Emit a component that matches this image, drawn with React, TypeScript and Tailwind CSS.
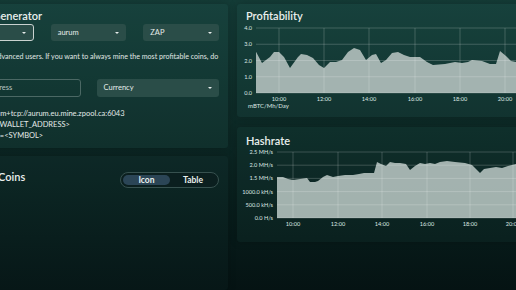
import React from "react";

type Pt = [number, number];

const profitPoints: Pt[] = [
  [256, 51.7], [262, 63], [270, 57], [274, 52], [279, 52], [284, 57], [290, 68],
  [298, 57], [301, 54], [307, 55], [313, 58], [319, 65], [324, 68], [330, 62],
  [336, 62], [342, 60], [348, 52], [354, 48], [360, 50], [366, 60], [372, 55],
  [376, 54], [381, 63], [386, 60], [392, 53], [398, 52], [404, 55], [410, 57],
  [420, 57], [427, 62], [433, 65], [445, 64], [455, 62], [462, 63], [468, 62],
  [472, 60], [482, 61], [490, 64], [496, 64], [500, 51], [506, 56], [511, 61],
  [516, 62], [524, 62],
];

const hashPoints: Pt[] = [
  [277, 177], [283, 177], [288, 179], [293, 180], [300, 179], [307, 178],
  [310, 182], [315, 182], [318, 181], [323, 177], [327, 175], [333, 177],
  [338, 176], [345, 175], [353, 175], [359, 174], [364, 173], [371, 173],
  [374, 173], [377, 162], [381, 164], [386, 166], [390, 162], [395, 163],
  [400, 163], [406, 164], [410, 170], [415, 166], [420, 163], [425, 164],
  [430, 163], [435, 164], [440, 162], [447, 161], [455, 162], [465, 163],
  [472, 165], [480, 173], [484, 169], [490, 168], [496, 167], [502, 168],
  [508, 166], [516, 164], [524, 164],
];

function areaPath(points: Pt[], base: number) {
  const line = points.map(([x, y], i) => `${i === 0 ? "M" : "L"}${x} ${y}`).join(" ");
  const first = points[0][0];
  const last = points[points.length - 1][0];
  return `${line} L${last} ${base} L${first} ${base} Z`;
}

type ChartProps = {
  offsetY: number;
  height: number;
  plotLeft: number;
  labelRight: number;
  yTicks: { y: number; label: string }[];
  xTicks: { x: number; label: string }[];
  xLabelY: number;
  points: Pt[];
  unit?: string;
};

// chart coordinates are written in page pixels, shifted back by the panel origin
function AreaChart({ offsetY, height, plotLeft, labelRight, yTicks, xTicks, xLabelY, points, unit }: ChartProps) {
  const top = yTicks[0].y;
  const base = yTicks[yTicks.length - 1].y;
  return (
    <svg width={300} height={height} className="block" style={{ fontFamily: "Lato, sans-serif" }}>
      <g transform={`translate(-237 ${-offsetY})`}>
        <path d={areaPath(points, base)} fill="#b0bebb" fillOpacity={0.92} />
        {yTicks.map(t => (
          <line key={t.label} x1={plotLeft} x2={540} y1={t.y} y2={t.y} stroke="#ffffff" strokeOpacity={0.28} strokeWidth={0.7} />
        ))}
        {xTicks.map(t => (
          <line key={t.label} x1={t.x} x2={t.x} y1={top} y2={base} stroke="#ffffff" strokeOpacity={0.28} strokeWidth={0.7} />
        ))}
        {yTicks.map(t => (
          <text key={t.label} x={labelRight} y={t.y + 2} textAnchor="end" fontSize={5.6} fill="#dfe7e5">
            {t.label}
          </text>
        ))}
        {xTicks.map(t => (
          <text key={t.label} x={t.x} y={xLabelY + 2} textAnchor="middle" fontSize={5.6} fill="#dfe7e5">
            {t.label}
          </text>
        ))}
        {unit && (
          <text x={248} y={107.5} fontSize={6} fill="#dfe7e5">
            {unit}
          </text>
        )}
      </g>
    </svg>
  );
}

function Caret() {
  return <span className="h-0 w-0 border-x-[2px] border-t-[2px] border-x-transparent border-t-[#e6ecea]" />;
}

function Select({ label, focused = false }: { label: string; focused?: boolean }) {
  return (
    <div
      className={`flex h-[17px] items-center justify-between rounded-[3px] bg-[#2a4d48] px-[7px] text-[7.5px] text-[#e6ecea] ${focused ? "border border-[#c9d2d0]" : ""}`}
    >
      <span>{label}</span>
      <Caret />
    </div>
  );
}

export default function App() {
  return (
    <div
      className="relative flex h-[290px] w-[516px] gap-[9px] overflow-hidden bg-gradient-to-b from-[#143c37] via-[#0c2724] to-[#051313] pt-[4px] text-[#e9efed]"
      style={{ fontFamily: "Lato, 'Noto Sans', sans-serif" }}
    >
      <div className="ml-[-51px] flex w-[279px] shrink-0 flex-col gap-[8px]">
        <section className="h-[151px] rounded-[3px] bg-[#2d6d64]/[0.14] px-[9px] pt-[5px] shadow-[0_0_8px_rgba(0,0,0,0.2)]">
          <h2 className="text-[11px] font-semibold leading-[14px]">Config Generator</h2>
          <div className="mt-[1px] grid grid-cols-3 gap-[17px]">
            <Select label="ccminer" focused />
            <Select label="aurum" />
            <Select label="ZAP" />
          </div>
          <p className="mt-[11px] whitespace-nowrap pl-[4px] text-[7.1px] leading-[10px] text-[#e0e7e5]">
            This is for advanced users. If you want to always mine the most profitable coins, do
          </p>
          <div className="mt-[17px] grid grid-cols-2 gap-[16px]">
            <div className="flex h-[18px] items-center rounded-[3px] border border-[#4b6864] pl-[4px] text-[7.5px] text-[#b9c6c3]">
              Wallet Address
            </div>
            <div className="flex h-[18px] items-center justify-between rounded-[3px] bg-[#2a4d48] px-[7px] text-[7.5px] text-[#e6ecea]">
              <span>Currency</span>
              <Caret />
            </div>
          </div>
          <div className="mt-[11px] whitespace-nowrap text-[7.5px] leading-[11px] text-[#e3eae8]">
            <div className="ml-[-2px]">Server: stratum+tcp://aurum.eu.mine.zpool.ca:6043</div>
            <div>Username: &lt;WALLET_ADDRESS&gt;</div>
            <div className="pl-[3px]">Password: c=&lt;SYMBOL&gt;</div>
          </div>
        </section>
        <section className="h-[140px] rounded-[3px] bg-[#2d6d64]/[0.06] px-[9px] pt-[16px] shadow-[0_0_8px_rgba(0,0,0,0.2)]">
          <div className="flex items-start justify-between">
            <h2 className="mt-[-2px] text-[11px] font-semibold leading-[14px]">Current Coins</h2>
            <div className="flex h-[16px] w-[99px] items-center rounded-full border border-[#37514f] bg-[#0b1f1f] p-[2px] text-[8.5px] font-bold">
              <span className="flex h-full w-[47px] items-center justify-center rounded-full bg-[#2b4556]">Icon</span>
              <span className="flex h-full flex-1 items-center justify-center">Table</span>
            </div>
          </div>
        </section>
      </div>

      <div className="flex w-[300px] shrink-0 flex-col gap-[10px]">
        <section className="h-[113px] rounded-[3px] bg-[#2d6d64]/[0.14] pt-[5px] shadow-[0_0_8px_rgba(0,0,0,0.2)]">
          <h2 className="pl-[9px] text-[11px] font-semibold leading-[14px]">Profitability</h2>
          <AreaChart
            offsetY={23}
            height={90}
            plotLeft={256}
            labelRight={252}
            yTicks={[
              { y: 28, label: "4.0" },
              { y: 44.25, label: "3.0" },
              { y: 60.5, label: "2.0" },
              { y: 76.75, label: "1.0" },
              { y: 93, label: "0.0" },
            ]}
            xTicks={[
              { x: 279, label: "10:00" },
              { x: 324, label: "12:00" },
              { x: 369, label: "14:00" },
              { x: 415, label: "16:00" },
              { x: 460, label: "18:00" },
              { x: 505, label: "20:00" },
            ]}
            xLabelY={99}
            points={profitPoints}
            unit="mBTC/Mh/Day"
          />
        </section>
        <section className="h-[115px] rounded-[3px] bg-[#2d6d64]/[0.09] pt-[7px] shadow-[0_0_8px_rgba(0,0,0,0.2)]">
          <h2 className="pl-[9px] text-[11px] font-semibold leading-[14px]">Hashrate</h2>
          <AreaChart
            offsetY={148}
            height={84}
            plotLeft={277}
            labelRight={273}
            yTicks={[
              { y: 152, label: "2.5 MH/s" },
              { y: 165.2, label: "2.0 MH/s" },
              { y: 178.4, label: "1.5 MH/s" },
              { y: 191.6, label: "1000.0 kH/s" },
              { y: 204.8, label: "500.0 kH/s" },
              { y: 218, label: "0.0 H/s" },
            ]}
            xTicks={[
              { x: 293, label: "10:00" },
              { x: 338, label: "12:00" },
              { x: 382, label: "14:00" },
              { x: 427, label: "16:00" },
              { x: 470, label: "18:00" },
              { x: 513, label: "20:00" },
            ]}
            xLabelY={224}
            points={hashPoints}
          />
        </section>
      </div>
    </div>
  );
}
